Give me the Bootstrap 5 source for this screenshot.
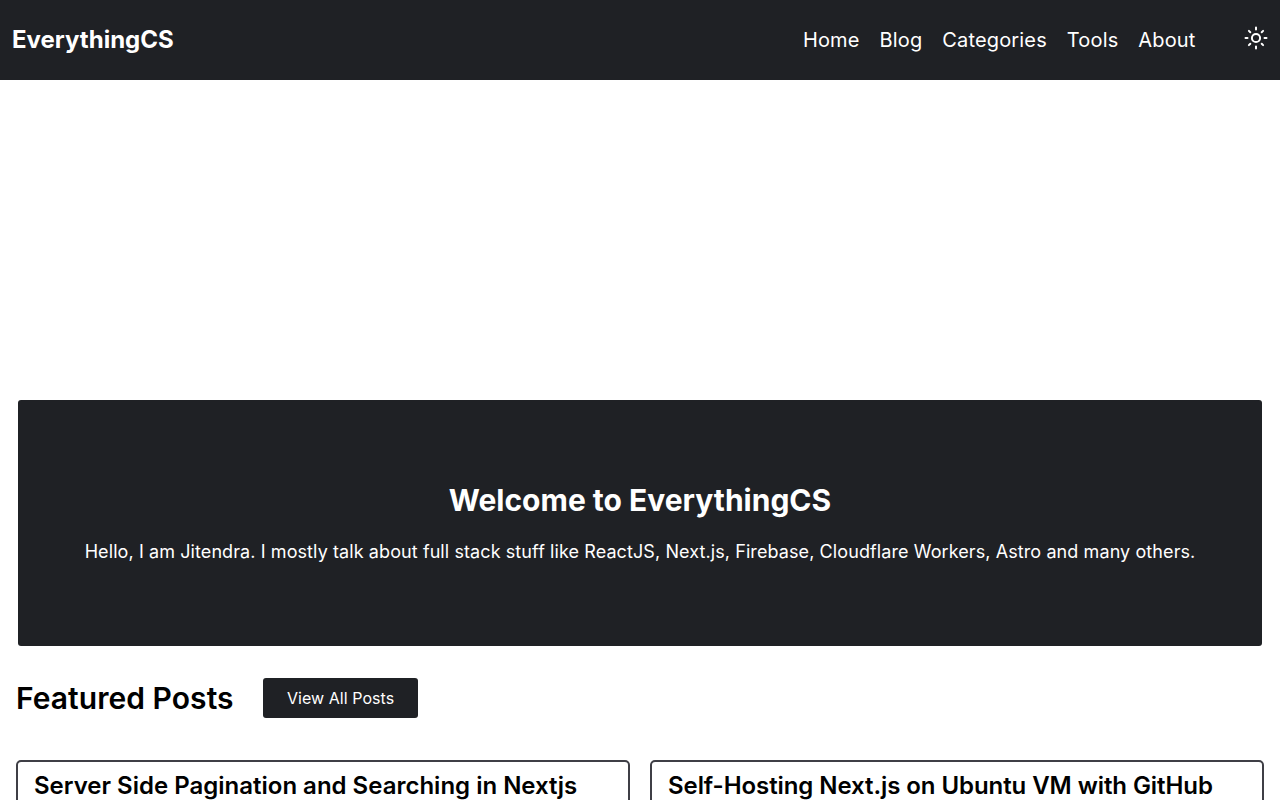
<!DOCTYPE html>
<html lang="en">

<head>
    <meta charset="UTF-8">
    <meta name="viewport" content="width=device-width, initial-scale=1.0">
    <title>EverythingCS</title>
    <link href="https://cdn.jsdelivr.net/npm/bootstrap@5.3.0/dist/css/bootstrap.min.css" rel="stylesheet">
    <style>
        html, body { height: 800px; overflow: hidden; }
        body { font-family: Inter, "Liberation Sans", sans-serif; color: #000; background: #fff; }
        .site-nav { height: 80px; background: #1f2125; padding: 0 12px; }
        .site-brand { font-size: 24px; font-weight: 700; color: #fff; text-decoration: none; }
        .site-links { gap: 20px; margin-right: 72.5px; }
        .site-links a { font-size: 20px; letter-spacing: .15px; color: #fff; text-decoration: none; }
        .theme-btn { width: 24px; height: 24px; color: #fff; top: 26px; right: 12px; }
        .ad-space { height: 320px; }
        .hero-box { height: 246px; margin: 0 18px; background: #1f2125; color: #fff; border-radius: 3px; }
        .hero-box h1 { font-size: 30px; font-weight: 700; margin-bottom: 19px; line-height: 40px; }
        .hero-box p { font-size: 18px; letter-spacing: .09px; margin: 0; line-height: 28px; position: relative; top: -1px; }
        .featured-row { padding: 32px 16px 0; gap: 29.4px; }
        .featured-row h2 { font-size: 30px; font-weight: 600; letter-spacing: .05px; margin: 0; line-height: 40px; }
        .all-btn { height: 40px; padding: 0 24px; background: #1f2125; color: #fff; font-size: 16px; letter-spacing: .05px; line-height: 40px; border-radius: 3px; border: 0; }
        .post-grid { display: grid; grid-template-columns: 1fr 1fr; gap: 20px; padding: 42px 16px 0; }
        .post-box { border: 2px solid #3f3f46; border-radius: 5px; padding: 8px 16px; height: 120px; }
        .post-box h3 { font-size: 24px; font-weight: 600; line-height: 32px; margin: 0; color: #000; }
        .post-box:last-child h3 { letter-spacing: -.07px; }
    </style>
</head>

<body>
    <nav class="site-nav d-flex align-items-center justify-content-between position-relative">
        <a class="site-brand" href="#">EverythingCS</a>
        <div class="site-links d-flex">
            <a href="#">Home</a>
            <a href="#">Blog</a>
            <a href="#">Categories</a>
            <a href="#">Tools</a>
            <a href="#">About</a>
        </div>
        <svg class="theme-btn position-absolute" viewBox="0 0 24 24" fill="none" stroke="currentColor" stroke-width="2" stroke-linecap="round">
            <circle cx="12" cy="12" r="4.1"/>
            <path d="M12 1.5v2M12 20.5v2M1.5 12h2M20.5 12h2M4.9 4.9L6.3 6.3M17.7 17.7l1.4 1.4M4.9 19.1L6.3 17.7M17.7 6.3l1.4-1.4"/>
        </svg>
    </nav>

    <div class="ad-space"></div>

    <section class="hero-box d-flex flex-column align-items-center justify-content-center text-center">
        <h1>Welcome to EverythingCS</h1>
        <p>Hello, I am Jitendra. I mostly talk about full stack stuff like ReactJS, Next.js, Firebase, Cloudflare Workers, Astro and many others.</p>
    </section>

    <div class="featured-row d-flex align-items-center">
        <h2>Featured Posts</h2>
        <a class="all-btn btn" href="#">View All Posts</a>
    </div>

    <div class="post-grid">
        <div class="post-box">
            <h3>Server Side Pagination and Searching in Nextjs</h3>
        </div>
        <div class="post-box">
            <h3>Self-Hosting Next.js on Ubuntu VM with GitHub</h3>
        </div>
    </div>

    <script src="https://cdn.jsdelivr.net/npm/bootstrap@5.3.0/dist/js/bootstrap.bundle.min.js"></script>
</body>

</html>
